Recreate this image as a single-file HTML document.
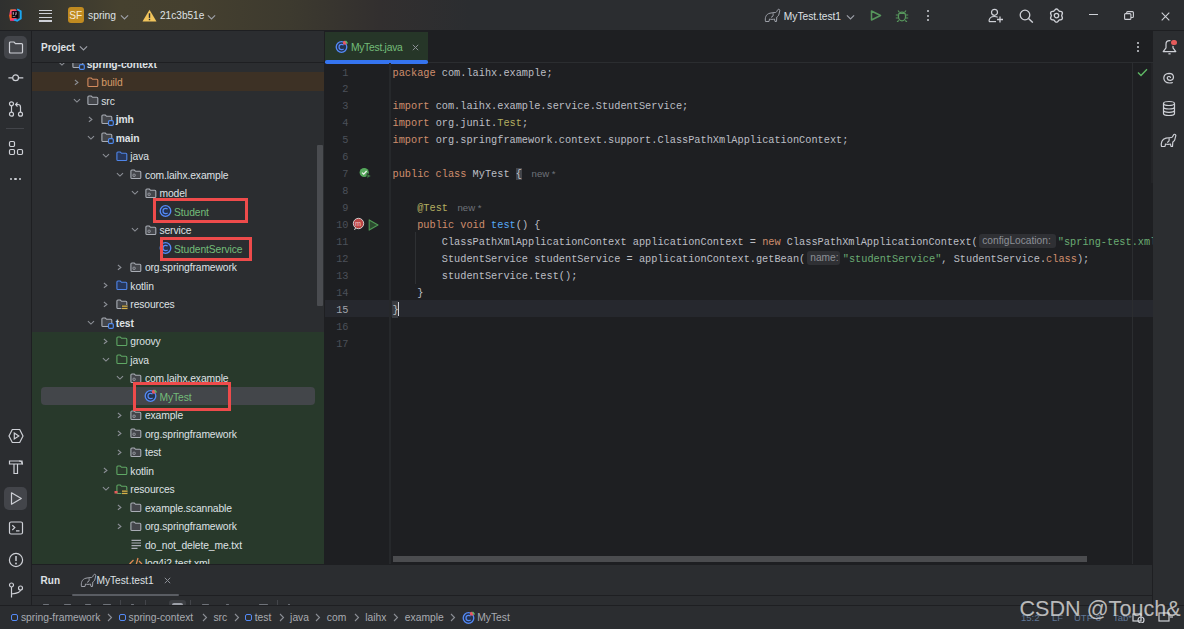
<!DOCTYPE html><html><head><meta charset="utf-8"><style>
*{margin:0;padding:0;box-sizing:border-box}
html,body{width:1184px;height:629px;overflow:hidden;background:#2B2D30;font-family:"Liberation Sans",sans-serif;color:#DFE1E5;position:relative}
.a{position:absolute}
.t{white-space:pre}
.tr{letter-spacing:-0.1px}
.c{position:absolute;font-family:"Liberation Mono",monospace;font-size:10.28px;white-space:pre;line-height:16.94px;height:16.94px;color:#BCBEC4}
.k{color:#CF8E6D}.s{color:#6AAB73}.an{color:#B3AE60}.m{color:#56A8F5}
.hint{display:inline-block;font-family:"Liberation Sans",sans-serif;font-size:10.2px;color:#8C8F96;background:#2F3034;border-radius:3px;line-height:14px;height:14px;vertical-align:1px;margin:0 1.5px 0 1.5px;padding-left:3px!important;letter-spacing:0px}
.auth{font-family:"Liberation Sans",sans-serif;font-size:9.6px;color:#6F737A}
</style></head><body><div class="a" style="left:0px;top:0px;width:1184px;height:30px;background:#2B2D30;background:linear-gradient(90deg,#2F302F 0px,#37362F 40px,#46412F 120px,#45402F 190px,#3D3A2F 290px,#322F2F 380px,#2B2D30 470px)"></div>
<div class="a" style="left:0px;top:30px;width:1184px;height:1px;background:#1E1F22;"></div>
<div class="a" style="left:0px;top:31px;width:31px;height:574px;background:#2B2D30;"></div>
<div class="a" style="left:31px;top:31px;width:1px;height:574px;background:#1E1F22;"></div>
<div class="a" style="left:32px;top:31px;width:292px;height:533px;background:#2B2D30;"></div>
<div class="a" style="left:324px;top:31px;width:1px;height:533px;background:#1E1F22;"></div>
<div class="a" style="left:325px;top:31px;width:828px;height:533px;background:#1E1F22;"></div>
<div class="a" style="left:1152px;top:31px;width:1px;height:574px;background:#1E1F22;"></div>
<div class="a" style="left:1153px;top:31px;width:31px;height:574px;background:#2B2D30;"></div>
<div class="a" style="left:32px;top:564px;width:1120px;height:1px;background:#1E1F22;"></div>
<div class="a" style="left:32px;top:565px;width:1120px;height:40px;background:#2B2D30;"></div>
<div class="a" style="left:0px;top:605px;width:1184px;height:1px;background:#1E1F22;"></div>
<div class="a" style="left:0px;top:606px;width:1184px;height:23px;background:#2B2D30;"></div>
<svg class="a" style="left:8px;top:8px;" width="15" height="15" viewBox="0 0 16 16" fill="none"><defs><linearGradient id="ijg" x1="0" y1="0" x2="0.3" y2="1"><stop offset="0" stop-color="#F9B233"/><stop offset="0.35" stop-color="#F2307F"/><stop offset="0.6" stop-color="#FF6A00"/><stop offset="1" stop-color="#F2307F"/></linearGradient></defs><path d="M2.5 1.6 L8 1.2 L9.5 3 L9 13.8 L2.2 13.6 L1.2 8 Z" fill="url(#ijg)"/><path d="M9.8 1.3 L13.6 3.4 L13.6 11.3 L9.8 13.6 L6.5 12.5" stroke="#1AA6F0" stroke-width="2" fill="none"/><rect x="4" y="3.3" width="7" height="7.4" fill="#0A0610"/><path d="M5.6 4.4 V7.2 M8.6 4.4 V6.8 Q8.6 7.3 7.6 7.3" stroke="#F4D9E8" stroke-width="0.9"/><rect x="5" y="8.9" width="2.8" height="0.7" fill="#BBBBBB"/></svg>
<div class="a" style="left:39px;top:9.8px;width:12.7px;height:1.1px;background:#CED0D6;"></div>
<div class="a" style="left:39px;top:13.350000000000001px;width:12.7px;height:1.1px;background:#CED0D6;"></div>
<div class="a" style="left:39px;top:16.9px;width:12.7px;height:1.1px;background:#CED0D6;"></div>
<div class="a" style="left:39px;top:20.45px;width:12.7px;height:1.1px;background:#CED0D6;"></div>
<div class="a" style="left:68px;top:7px;width:15.5px;height:16px;background:#C18B20;border-radius:3px"></div>
<div class="a t" style="left:68px;top:9.80px;font-size:10.2px;line-height:12px;color:#F3EAD6;width:15.5px;text-align:center;">SF</div>
<div class="a t" style="left:88px;top:9.00px;font-size:10.3px;line-height:14px;color:#DFE1E5;">spring</div>
<svg class="a" style="left:120.2px;top:13.5px;" width="9" height="7" viewBox="0 0 9 7" fill="none"><path d="M0.9 1.3 L4.5 4.9 L8.1 1.3" stroke="#9DA0A8" stroke-width="1.15"/></svg>
<svg class="a" style="left:142px;top:9px;" width="15" height="13" viewBox="0 0 15 13" fill="none"><path d="M7.5 0.8 L14.5 12.5 H0.5 Z" fill="#F2C55C"/><rect x="6.8" y="4.3" width="1.4" height="4.6" fill="#2B2D30"/><rect x="6.8" y="9.8" width="1.4" height="1.4" fill="#2B2D30"/></svg>
<div class="a t" style="left:160px;top:9.00px;font-size:10.1px;line-height:14px;color:#DFE1E5;">21c3b51e</div>
<svg class="a" style="left:207.0px;top:13.5px;" width="9" height="7" viewBox="0 0 9 7" fill="none"><path d="M0.9 1.3 L4.5 4.9 L8.1 1.3" stroke="#9DA0A8" stroke-width="1.15"/></svg>
<svg class="a" style="left:764px;top:8px;" width="17" height="15" viewBox="0 0 17 15" fill="none"><path d="M1.5 13.5 C0.8 10 1.8 6 6 5.2 C8 4.8 10 4.5 11.5 4.5 C12.5 4.5 13 3 13.5 2 C14 1 15.5 1 15.8 2.2 C16 3.5 15 4.5 15 6 C15 7.5 13.5 8.5 12.8 9 L12.5 13.5 H11 L10.5 11 C9 11.5 7 11.5 5.5 11 L5 13.5 Z" stroke="#9DA0A8" stroke-width="1" fill="none" stroke-linejoin="round"/><path d="M9 5.2 C9.5 7.5 9 9 7 9.3" stroke="#9DA0A8" stroke-width="1" fill="none"/></svg>
<div class="a t" style="left:783.8px;top:9.70px;font-size:10.2px;line-height:14px;color:#DFE1E5;">MyTest.test1</div>
<svg class="a" style="left:845.5px;top:13.5px;" width="9" height="7" viewBox="0 0 9 7" fill="none"><path d="M0.9 1.3 L4.5 4.9 L8.1 1.3" stroke="#9DA0A8" stroke-width="1.15"/></svg>
<svg class="a" style="left:870px;top:10px;" width="12" height="11" viewBox="0 0 12 11" fill="none"><path d="M1.5 1 L10.5 5.5 L1.5 10 Z" stroke="#57965C" stroke-width="1.5" stroke-linejoin="round"/></svg>
<svg class="a" style="left:895px;top:9px;" width="14" height="13" viewBox="0 0 14 13" fill="none"><ellipse cx="7" cy="7.5" rx="3.6" ry="4.3" stroke="#57965C" stroke-width="1.3"/><path d="M4.5 3.5 L3 1.5 M9.5 3.5 L11 1.5 M3.4 6 H0.8 M10.6 6 H13.2 M3.4 9 H0.8 M10.6 9 H13.2 M4 11.5 L2 12.8 M10 11.5 L12 12.8 M3.5 4.5 H10.5" stroke="#57965C" stroke-width="1.2"/></svg>
<div class="a" style="left:927px;top:10.3px;width:2px;height:2px;background:#CED0D6;border-radius:1px"></div>
<div class="a" style="left:927px;top:14.5px;width:2px;height:2px;background:#CED0D6;border-radius:1px"></div>
<div class="a" style="left:927px;top:18.700000000000003px;width:2px;height:2px;background:#CED0D6;border-radius:1px"></div>
<svg class="a" style="left:988px;top:8px;" width="16" height="15" viewBox="0 0 16 15" fill="none"><circle cx="6.5" cy="4.3" r="3" stroke="#CED0D6" stroke-width="1.2"/><path d="M1 13.5 C1 9.5 3.5 8.5 6.5 8.5 C8 8.5 9 8.8 9.7 9.2" stroke="#CED0D6" stroke-width="1.2"/><path d="M1 13.6 H8" stroke="#CED0D6" stroke-width="1.2"/><path d="M12 8.5 V14.5 M9 11.5 H15" stroke="#CED0D6" stroke-width="1.3"/></svg>
<svg class="a" style="left:1019px;top:9px;" width="15" height="14" viewBox="0 0 15 14" fill="none"><circle cx="6" cy="6" r="4.8" stroke="#CED0D6" stroke-width="1.3"/><path d="M9.5 9.5 L13.8 13.6" stroke="#CED0D6" stroke-width="1.4"/></svg>
<svg class="a" style="left:1049px;top:8px;" width="15" height="15" viewBox="0 0 15 15" fill="none"><path d="M7.50 1.00 L8.07 1.12 L8.59 1.44 L9.03 1.90 L9.40 2.38 L9.74 2.80 L10.10 3.10 L10.54 3.26 L11.07 3.35 L11.67 3.43 L12.29 3.58 L12.83 3.87 L13.22 4.30 L13.40 4.85 L13.37 5.46 L13.20 6.07 L12.97 6.64 L12.77 7.14 L12.70 7.60 L12.77 8.06 L12.97 8.56 L13.20 9.13 L13.37 9.74 L13.40 10.35 L13.22 10.90 L12.83 11.33 L12.29 11.62 L11.67 11.77 L11.07 11.85 L10.54 11.94 L10.10 12.10 L9.74 12.40 L9.40 12.82 L9.03 13.30 L8.59 13.76 L8.07 14.08 L7.50 14.20 L6.93 14.08 L6.41 13.76 L5.97 13.30 L5.60 12.82 L5.26 12.40 L4.90 12.10 L4.46 11.94 L3.93 11.85 L3.33 11.77 L2.71 11.62 L2.17 11.33 L1.78 10.90 L1.60 10.35 L1.63 9.74 L1.80 9.13 L2.03 8.56 L2.23 8.06 L2.30 7.60 L2.23 7.14 L2.03 6.64 L1.80 6.07 L1.63 5.46 L1.60 4.85 L1.78 4.30 L2.17 3.87 L2.71 3.58 L3.33 3.43 L3.93 3.35 L4.46 3.26 L4.90 3.10 L5.26 2.80 L5.60 2.38 L5.97 1.90 L6.41 1.44 L6.93 1.12 L7.50 1.00 Z" stroke="#CED0D6" stroke-width="1.35" stroke-linejoin="round"/><circle cx="7.5" cy="7.6" r="2.2" stroke="#CED0D6" stroke-width="1.3"/></svg>
<div class="a" style="left:1089px;top:14.3px;width:8.5px;height:1.1px;background:#CED0D6;"></div>
<svg class="a" style="left:1124px;top:11px;" width="10" height="9" viewBox="0 0 10 9" fill="none"><rect x="0.6" y="2.6" width="6.3" height="5.8" rx="1" stroke="#CED0D6" stroke-width="1.1"/><path d="M2.7 2.6 V1.6 Q2.7 0.6 3.7 0.6 H8.4 Q9.4 0.6 9.4 1.6 V5.5 Q9.4 6.5 8.4 6.5 H6.9" stroke="#CED0D6" stroke-width="1.1"/></svg>
<svg class="a" style="left:1161px;top:11.5px;" width="9" height="9" viewBox="0 0 9 9" fill="none"><path d="M0.7 0.7 L8.3 8.3 M8.3 0.7 L0.7 8.3" stroke="#CED0D6" stroke-width="1.1"/></svg>
<div class="a" style="left:4px;top:36px;width:23px;height:23px;background:#43454A;border-radius:5px"></div>
<svg class="a" style="left:8px;top:40px;" width="16" height="15" viewBox="0 0 16 15" fill="none"><path d="M1.5 3 Q1.5 2 2.5 2 H6 L7.5 3.6 H13.5 Q14.5 3.6 14.5 4.6 V12 Q14.5 13 13.5 13 H2.5 Q1.5 13 1.5 12 Z" stroke="#CED0D6" stroke-width="1.2" fill="none"/></svg>
<svg class="a" style="left:5px;top:72px;" width="22" height="12" viewBox="0 0 22 12" fill="none"><circle cx="10.6" cy="5.8" r="2.9" stroke="#CED0D6" stroke-width="1.2" fill="none"/><path d="M3.4 5.8 H7.7 M13.5 5.8 H18.3" stroke="#CED0D6" stroke-width="1.2" fill="none"/></svg>
<svg class="a" style="left:8px;top:101px;" width="16" height="16" viewBox="0 0 16 16" fill="none"><circle cx="3.5" cy="2.8" r="2" stroke="#CED0D6" stroke-width="1.2" fill="none"/><circle cx="3.5" cy="13.2" r="2" stroke="#CED0D6" stroke-width="1.2" fill="none"/><circle cx="12.5" cy="13.2" r="2" stroke="#CED0D6" stroke-width="1.2" fill="none"/><path d="M3.5 4.8 V11.2 M12.5 11.2 V6 Q12.5 3.5 10 3.5 H8 M9.5 1.5 L7.6 3.5 L9.5 5.5" stroke="#CED0D6" stroke-width="1.2" fill="none"/></svg>
<div class="a" style="left:6px;top:127.5px;width:18px;height:1px;background:#43454A;"></div>
<svg class="a" style="left:8px;top:140px;" width="16" height="16" viewBox="0 0 16 16" fill="none"><rect x="1.5" y="1.5" width="5" height="5" rx="1.2" stroke="#CED0D6" stroke-width="1.2" fill="none"/><rect x="1.5" y="9.5" width="5" height="5" rx="1.2" stroke="#CED0D6" stroke-width="1.2" fill="none"/><rect x="9.5" y="9.5" width="5" height="5" rx="1.2" stroke="#CED0D6" stroke-width="1.2" fill="none"/></svg>
<div class="a" style="left:9.5px;top:177.8px;width:2.3px;height:2.3px;background:#CED0D6;border-radius:1px"></div>
<div class="a" style="left:14.3px;top:177.8px;width:2.3px;height:2.3px;background:#CED0D6;border-radius:1px"></div>
<div class="a" style="left:19.1px;top:177.8px;width:2.3px;height:2.3px;background:#CED0D6;border-radius:1px"></div>
<svg class="a" style="left:8px;top:428px;" width="16" height="16" viewBox="0 0 16 16" fill="none"><path d="M4.3 1.5 H11.7 L15 8 L11.7 14.5 H4.3 L1 8 Z" stroke="#CED0D6" stroke-width="1.2" fill="none"/><path d="M6.3 5 L10.8 8 L6.3 11 Z" stroke="#CED0D6" stroke-width="1.2" fill="none"/></svg>
<svg class="a" style="left:8px;top:459px;" width="16" height="16" viewBox="0 0 16 16" fill="none"><path d="M1.5 2 H14 V5 H1.5 Z" stroke="#CED0D6" stroke-width="1.2" fill="none"/><path d="M6 5 V14.5 H9.5 V5" stroke="#CED0D6" stroke-width="1.2" fill="none"/><path d="M11 2 Q14.5 2 14.5 5.5" stroke="#CED0D6" stroke-width="1.2" fill="none"/></svg>
<div class="a" style="left:4px;top:487px;width:23px;height:23px;background:#43454A;border-radius:5px"></div>
<svg class="a" style="left:9px;top:491px;" width="14" height="15" viewBox="0 0 14 15" fill="none"><path d="M2.5 1.8 L12.3 7.5 L2.5 13.2 Z" stroke="#CED0D6" stroke-width="1.2" fill="none" stroke-linejoin="round"/></svg>
<svg class="a" style="left:8px;top:520px;" width="16" height="16" viewBox="0 0 16 16" fill="none"><rect x="1.5" y="2" width="13" height="12" rx="1.5" stroke="#CED0D6" stroke-width="1.2" fill="none"/><path d="M4.3 5.2 L6.8 7.6 L4.3 10 M8 10.8 H11.5" stroke="#CED0D6" stroke-width="1.2" fill="none"/></svg>
<svg class="a" style="left:8px;top:552px;" width="16" height="16" viewBox="0 0 16 16" fill="none"><circle cx="8" cy="8" r="6.6" stroke="#CED0D6" stroke-width="1.2" fill="none"/><path d="M8 4 V9" stroke="#CED0D6" stroke-width="1.5"/><circle cx="8" cy="11.5" r="0.9" fill="#CED0D6"/></svg>
<svg class="a" style="left:8px;top:582px;" width="16" height="17" viewBox="0 0 16 17" fill="none"><circle cx="3.5" cy="3" r="2" stroke="#CED0D6" stroke-width="1.2" fill="none"/><circle cx="12.5" cy="6" r="2" stroke="#CED0D6" stroke-width="1.2" fill="none"/><path d="M3.5 5 V15.5 M12.5 8 Q12.5 11 3.5 12" stroke="#CED0D6" stroke-width="1.2" fill="none"/></svg>
<div class="a" style="left:32px;top:31px;width:292px;height:533px;overflow:hidden"><div class="a" style="left:0px;top:41.099999999999994px;width:292px;height:18.5px;background:#3D3125;"></div><div class="a" style="left:0px;top:300.5px;width:292px;height:232.5px;background:#28392B;"></div><div class="a" style="left:8.600000000000001px;top:356px;width:274.5px;height:18px;background:#43464A;border-radius:4px"></div><div class="a" style="left:285.4px;top:114.30000000000001px;width:5.5px;height:160.5px;background:#4A4C50;border-radius:1px"></div><svg class="a" style="left:26.0px;top:29.7px;" width="9" height="7" viewBox="0 0 9 7" fill="none"><path d="M0.9 1.1 L3.95 4.1 L7 1.1" stroke="#8C8F96" stroke-width="1.1"/></svg><svg class="a" style="left:38.0px;top:25.2px;" width="15" height="14" viewBox="0 0 15 14" fill="none"><path d="M2.9 4.1 Q2.9 3.05 3.95 3.05 H6.3 L7.6 4.3 H11.75 Q12.8 4.3 12.8 5.35 V10.4 Q12.8 11.45 11.75 11.45 H3.95 Q2.9 11.45 2.9 10.4 Z" stroke="#A9ADB5" stroke-width="1.1" fill="#43454A"/><rect x="9.5" y="8.6" width="4.8" height="4.8" rx="1.2" stroke="#4F8BF0" stroke-width="1.2" fill="#2B2D30"/></svg><div class="a t" style="left:54.7px;top:26.80px;font-size:10.3px;line-height:14px;color:#DFE1E5;font-weight:bold;letter-spacing:-0.1px;">spring-context</div><svg class="a" style="left:41.55px;top:46.7px;" width="7" height="9" viewBox="0 0 7 9" fill="none"><path d="M0.9 2 L3.9 4.4 L0.9 6.8" stroke="#8C8F96" stroke-width="1.1"/></svg><svg class="a" style="left:52.55px;top:43.7px;" width="15" height="14" viewBox="0 0 15 14" fill="none"><path d="M2.9 4.1 Q2.9 3.05 3.95 3.05 H6.3 L7.6 4.3 H11.75 Q12.8 4.3 12.8 5.35 V10.4 Q12.8 11.45 11.75 11.45 H3.95 Q2.9 11.45 2.9 10.4 Z" stroke="#D48B5E" stroke-width="1.1" fill="#46342A"/></svg><div class="a t" style="left:69.25px;top:45.30px;font-size:10.3px;line-height:14px;color:#D59A68;letter-spacing:-0.1px;">build</div><svg class="a" style="left:40.55px;top:66.7px;" width="9" height="7" viewBox="0 0 9 7" fill="none"><path d="M0.9 1.1 L3.95 4.1 L7 1.1" stroke="#8C8F96" stroke-width="1.1"/></svg><svg class="a" style="left:52.55px;top:62.2px;" width="15" height="14" viewBox="0 0 15 14" fill="none"><path d="M2.9 4.1 Q2.9 3.05 3.95 3.05 H6.3 L7.6 4.3 H11.75 Q12.8 4.3 12.8 5.35 V10.4 Q12.8 11.45 11.75 11.45 H3.95 Q2.9 11.45 2.9 10.4 Z" stroke="#A9ADB5" stroke-width="1.1" fill="#43454A"/></svg><div class="a t" style="left:69.25px;top:63.80px;font-size:10.3px;line-height:14px;color:#DFE1E5;letter-spacing:-0.1px;">src</div><svg class="a" style="left:56.1px;top:83.7px;" width="7" height="9" viewBox="0 0 7 9" fill="none"><path d="M0.9 2 L3.9 4.4 L0.9 6.8" stroke="#8C8F96" stroke-width="1.1"/></svg><svg class="a" style="left:67.1px;top:80.7px;" width="15" height="14" viewBox="0 0 15 14" fill="none"><path d="M2.9 4.1 Q2.9 3.05 3.95 3.05 H6.3 L7.6 4.3 H11.75 Q12.8 4.3 12.8 5.35 V10.4 Q12.8 11.45 11.75 11.45 H3.95 Q2.9 11.45 2.9 10.4 Z" stroke="#A9ADB5" stroke-width="1.1" fill="#43454A"/><rect x="9.5" y="8.6" width="4.8" height="4.8" rx="1.2" stroke="#4F8BF0" stroke-width="1.2" fill="#2B2D30"/></svg><div class="a t" style="left:83.8px;top:82.30px;font-size:10.3px;line-height:14px;color:#DFE1E5;font-weight:bold;letter-spacing:-0.1px;">jmh</div><svg class="a" style="left:55.1px;top:103.7px;" width="9" height="7" viewBox="0 0 9 7" fill="none"><path d="M0.9 1.1 L3.95 4.1 L7 1.1" stroke="#8C8F96" stroke-width="1.1"/></svg><svg class="a" style="left:67.1px;top:99.2px;" width="15" height="14" viewBox="0 0 15 14" fill="none"><path d="M2.9 4.1 Q2.9 3.05 3.95 3.05 H6.3 L7.6 4.3 H11.75 Q12.8 4.3 12.8 5.35 V10.4 Q12.8 11.45 11.75 11.45 H3.95 Q2.9 11.45 2.9 10.4 Z" stroke="#A9ADB5" stroke-width="1.1" fill="#43454A"/><rect x="9.5" y="8.6" width="4.8" height="4.8" rx="1.2" stroke="#4F8BF0" stroke-width="1.2" fill="#2B2D30"/></svg><div class="a t" style="left:83.8px;top:100.80px;font-size:10.3px;line-height:14px;color:#DFE1E5;font-weight:bold;letter-spacing:-0.1px;">main</div><svg class="a" style="left:69.65px;top:122.2px;" width="9" height="7" viewBox="0 0 9 7" fill="none"><path d="M0.9 1.1 L3.95 4.1 L7 1.1" stroke="#8C8F96" stroke-width="1.1"/></svg><svg class="a" style="left:81.65px;top:117.7px;" width="15" height="14" viewBox="0 0 15 14" fill="none"><path d="M2.9 4.1 Q2.9 3.05 3.95 3.05 H6.3 L7.6 4.3 H11.75 Q12.8 4.3 12.8 5.35 V10.4 Q12.8 11.45 11.75 11.45 H3.95 Q2.9 11.45 2.9 10.4 Z" stroke="#4F85E8" stroke-width="1.1" fill="#27375A"/></svg><div class="a t" style="left:98.35px;top:119.30px;font-size:10.3px;line-height:14px;color:#DFE1E5;letter-spacing:-0.1px;">java</div><svg class="a" style="left:84.2px;top:140.7px;" width="9" height="7" viewBox="0 0 9 7" fill="none"><path d="M0.9 1.1 L3.95 4.1 L7 1.1" stroke="#8C8F96" stroke-width="1.1"/></svg><svg class="a" style="left:96.2px;top:136.2px;" width="15" height="14" viewBox="0 0 15 14" fill="none"><path d="M2.9 4.1 Q2.9 3.05 3.95 3.05 H6.3 L7.6 4.3 H11.75 Q12.8 4.3 12.8 5.35 V10.4 Q12.8 11.45 11.75 11.45 H3.95 Q2.9 11.45 2.9 10.4 Z" stroke="#A9ADB5" stroke-width="1.1" fill="#43454A"/><rect x="5" y="7.2" width="2.2" height="2.2" rx="0.5" stroke="#A9ADB5" stroke-width="0.8"/></svg><div class="a t" style="left:112.9px;top:137.80px;font-size:10.3px;line-height:14px;color:#DFE1E5;letter-spacing:-0.1px;">com.laihx.example</div><svg class="a" style="left:98.75px;top:159.2px;" width="9" height="7" viewBox="0 0 9 7" fill="none"><path d="M0.9 1.1 L3.95 4.1 L7 1.1" stroke="#8C8F96" stroke-width="1.1"/></svg><svg class="a" style="left:110.75px;top:154.7px;" width="15" height="14" viewBox="0 0 15 14" fill="none"><path d="M2.9 4.1 Q2.9 3.05 3.95 3.05 H6.3 L7.6 4.3 H11.75 Q12.8 4.3 12.8 5.35 V10.4 Q12.8 11.45 11.75 11.45 H3.95 Q2.9 11.45 2.9 10.4 Z" stroke="#A9ADB5" stroke-width="1.1" fill="#43454A"/><rect x="5" y="7.2" width="2.2" height="2.2" rx="0.5" stroke="#A9ADB5" stroke-width="0.8"/></svg><div class="a t" style="left:127.45px;top:156.30px;font-size:10.3px;line-height:14px;color:#DFE1E5;letter-spacing:-0.1px;">model</div><svg class="a" style="left:126.3px;top:173.2px;" width="15" height="14" viewBox="0 0 15 14" fill="none"><circle cx="7.5" cy="7" r="5.3" stroke="#548AF7" stroke-width="1.3" fill="#25324D"/><path d="M9.6 5.2 Q8.9 4.3 7.6 4.3 Q5 4.3 5 7 Q5 9.7 7.6 9.7 Q8.9 9.7 9.6 8.8" stroke="#548AF7" stroke-width="1.2"/></svg><div class="a t" style="left:142.0px;top:174.80px;font-size:10.3px;line-height:14px;color:#73BD79;letter-spacing:-0.1px;">Student</div><svg class="a" style="left:98.75px;top:196.2px;" width="9" height="7" viewBox="0 0 9 7" fill="none"><path d="M0.9 1.1 L3.95 4.1 L7 1.1" stroke="#8C8F96" stroke-width="1.1"/></svg><svg class="a" style="left:110.75px;top:191.7px;" width="15" height="14" viewBox="0 0 15 14" fill="none"><path d="M2.9 4.1 Q2.9 3.05 3.95 3.05 H6.3 L7.6 4.3 H11.75 Q12.8 4.3 12.8 5.35 V10.4 Q12.8 11.45 11.75 11.45 H3.95 Q2.9 11.45 2.9 10.4 Z" stroke="#A9ADB5" stroke-width="1.1" fill="#43454A"/><rect x="5" y="7.2" width="2.2" height="2.2" rx="0.5" stroke="#A9ADB5" stroke-width="0.8"/></svg><div class="a t" style="left:127.45px;top:193.30px;font-size:10.3px;line-height:14px;color:#DFE1E5;letter-spacing:-0.1px;">service</div><svg class="a" style="left:126.3px;top:210.2px;" width="15" height="14" viewBox="0 0 15 14" fill="none"><circle cx="7.5" cy="7" r="5.3" stroke="#548AF7" stroke-width="1.3" fill="#25324D"/><path d="M9.6 5.2 Q8.9 4.3 7.6 4.3 Q5 4.3 5 7 Q5 9.7 7.6 9.7 Q8.9 9.7 9.6 8.8" stroke="#548AF7" stroke-width="1.2"/></svg><div class="a t" style="left:142.0px;top:211.80px;font-size:10.3px;line-height:14px;color:#73BD79;letter-spacing:-0.1px;">StudentService</div><svg class="a" style="left:85.2px;top:231.7px;" width="7" height="9" viewBox="0 0 7 9" fill="none"><path d="M0.9 2 L3.9 4.4 L0.9 6.8" stroke="#8C8F96" stroke-width="1.1"/></svg><svg class="a" style="left:96.2px;top:228.7px;" width="15" height="14" viewBox="0 0 15 14" fill="none"><path d="M2.9 4.1 Q2.9 3.05 3.95 3.05 H6.3 L7.6 4.3 H11.75 Q12.8 4.3 12.8 5.35 V10.4 Q12.8 11.45 11.75 11.45 H3.95 Q2.9 11.45 2.9 10.4 Z" stroke="#A9ADB5" stroke-width="1.1" fill="#43454A"/><rect x="5" y="7.2" width="2.2" height="2.2" rx="0.5" stroke="#A9ADB5" stroke-width="0.8"/></svg><div class="a t" style="left:112.9px;top:230.30px;font-size:10.3px;line-height:14px;color:#DFE1E5;letter-spacing:-0.1px;">org.springframework</div><svg class="a" style="left:70.65px;top:250.2px;" width="7" height="9" viewBox="0 0 7 9" fill="none"><path d="M0.9 2 L3.9 4.4 L0.9 6.8" stroke="#8C8F96" stroke-width="1.1"/></svg><svg class="a" style="left:81.65px;top:247.2px;" width="15" height="14" viewBox="0 0 15 14" fill="none"><path d="M2.9 4.1 Q2.9 3.05 3.95 3.05 H6.3 L7.6 4.3 H11.75 Q12.8 4.3 12.8 5.35 V10.4 Q12.8 11.45 11.75 11.45 H3.95 Q2.9 11.45 2.9 10.4 Z" stroke="#4F85E8" stroke-width="1.1" fill="#27375A"/></svg><div class="a t" style="left:98.35px;top:248.80px;font-size:10.3px;line-height:14px;color:#DFE1E5;letter-spacing:-0.1px;">kotlin</div><svg class="a" style="left:70.65px;top:268.7px;" width="7" height="9" viewBox="0 0 7 9" fill="none"><path d="M0.9 2 L3.9 4.4 L0.9 6.8" stroke="#8C8F96" stroke-width="1.1"/></svg><svg class="a" style="left:81.65px;top:265.7px;" width="15" height="14" viewBox="0 0 15 14" fill="none"><path d="M2.9 4.1 Q2.9 3.05 3.95 3.05 H6.3 L7.6 4.3 H11.75 Q12.8 4.3 12.8 5.35 V10.4 Q12.8 11.45 11.75 11.45 H3.95 Q2.9 11.45 2.9 10.4 Z" stroke="#A9ADB5" stroke-width="1.1" fill="#43454A"/><rect x="7.5" y="8" width="6" height="4.5" fill="#2B2D30"/><rect x="8" y="8.5" width="5.5" height="1.3" fill="#D8B24A"/><rect x="8" y="10.8" width="5.5" height="1.3" fill="#D8B24A"/></svg><div class="a t" style="left:98.35px;top:267.30px;font-size:10.3px;line-height:14px;color:#DFE1E5;letter-spacing:-0.1px;">resources</div><svg class="a" style="left:55.1px;top:288.7px;" width="9" height="7" viewBox="0 0 9 7" fill="none"><path d="M0.9 1.1 L3.95 4.1 L7 1.1" stroke="#8C8F96" stroke-width="1.1"/></svg><svg class="a" style="left:67.1px;top:284.2px;" width="15" height="14" viewBox="0 0 15 14" fill="none"><path d="M2.9 4.1 Q2.9 3.05 3.95 3.05 H6.3 L7.6 4.3 H11.75 Q12.8 4.3 12.8 5.35 V10.4 Q12.8 11.45 11.75 11.45 H3.95 Q2.9 11.45 2.9 10.4 Z" stroke="#A9ADB5" stroke-width="1.1" fill="#43454A"/><rect x="9.5" y="8.6" width="4.8" height="4.8" rx="1.2" stroke="#4F8BF0" stroke-width="1.2" fill="#2B2D30"/></svg><div class="a t" style="left:83.8px;top:285.80px;font-size:10.3px;line-height:14px;color:#DFE1E5;font-weight:bold;letter-spacing:-0.1px;">test</div><svg class="a" style="left:70.65px;top:305.7px;" width="7" height="9" viewBox="0 0 7 9" fill="none"><path d="M0.9 2 L3.9 4.4 L0.9 6.8" stroke="#8C8F96" stroke-width="1.1"/></svg><svg class="a" style="left:81.65px;top:302.7px;" width="15" height="14" viewBox="0 0 15 14" fill="none"><path d="M2.9 4.1 Q2.9 3.05 3.95 3.05 H6.3 L7.6 4.3 H11.75 Q12.8 4.3 12.8 5.35 V10.4 Q12.8 11.45 11.75 11.45 H3.95 Q2.9 11.45 2.9 10.4 Z" stroke="#5FA865" stroke-width="1.1" fill="#2A3A2C"/></svg><div class="a t" style="left:98.35px;top:304.30px;font-size:10.3px;line-height:14px;color:#DFE1E5;letter-spacing:-0.1px;">groovy</div><svg class="a" style="left:69.65px;top:325.7px;" width="9" height="7" viewBox="0 0 9 7" fill="none"><path d="M0.9 1.1 L3.95 4.1 L7 1.1" stroke="#8C8F96" stroke-width="1.1"/></svg><svg class="a" style="left:81.65px;top:321.2px;" width="15" height="14" viewBox="0 0 15 14" fill="none"><path d="M2.9 4.1 Q2.9 3.05 3.95 3.05 H6.3 L7.6 4.3 H11.75 Q12.8 4.3 12.8 5.35 V10.4 Q12.8 11.45 11.75 11.45 H3.95 Q2.9 11.45 2.9 10.4 Z" stroke="#5FA865" stroke-width="1.1" fill="#2A3A2C"/></svg><div class="a t" style="left:98.35px;top:322.80px;font-size:10.3px;line-height:14px;color:#DFE1E5;letter-spacing:-0.1px;">java</div><svg class="a" style="left:84.2px;top:344.2px;" width="9" height="7" viewBox="0 0 9 7" fill="none"><path d="M0.9 1.1 L3.95 4.1 L7 1.1" stroke="#8C8F96" stroke-width="1.1"/></svg><svg class="a" style="left:96.2px;top:339.7px;" width="15" height="14" viewBox="0 0 15 14" fill="none"><path d="M2.9 4.1 Q2.9 3.05 3.95 3.05 H6.3 L7.6 4.3 H11.75 Q12.8 4.3 12.8 5.35 V10.4 Q12.8 11.45 11.75 11.45 H3.95 Q2.9 11.45 2.9 10.4 Z" stroke="#A9ADB5" stroke-width="1.1" fill="#43454A"/><rect x="5" y="7.2" width="2.2" height="2.2" rx="0.5" stroke="#A9ADB5" stroke-width="0.8"/></svg><div class="a t" style="left:112.9px;top:341.30px;font-size:10.3px;line-height:14px;color:#DFE1E5;letter-spacing:-0.1px;">com.laihx.example</div><svg class="a" style="left:110.75px;top:358.2px;" width="15" height="14" viewBox="0 0 15 14" fill="none"><circle cx="7.5" cy="7" r="5.3" stroke="#548AF7" stroke-width="1.3" fill="#25324D"/><path d="M9.6 5.2 Q8.9 4.3 7.6 4.3 Q5 4.3 5 7 Q5 9.7 7.6 9.7 Q8.9 9.7 9.6 8.8" stroke="#548AF7" stroke-width="1.2"/><circle cx="10.8" cy="2.8" r="2" fill="#E55765"/><path d="M11.5 1 L13.5 3.5" stroke="#5FB865" stroke-width="1.3"/></svg><div class="a t" style="left:127.45px;top:359.80px;font-size:10.3px;line-height:14px;color:#73BD79;letter-spacing:-0.1px;">MyTest</div><svg class="a" style="left:85.2px;top:379.7px;" width="7" height="9" viewBox="0 0 7 9" fill="none"><path d="M0.9 2 L3.9 4.4 L0.9 6.8" stroke="#8C8F96" stroke-width="1.1"/></svg><svg class="a" style="left:96.2px;top:376.7px;" width="15" height="14" viewBox="0 0 15 14" fill="none"><path d="M2.9 4.1 Q2.9 3.05 3.95 3.05 H6.3 L7.6 4.3 H11.75 Q12.8 4.3 12.8 5.35 V10.4 Q12.8 11.45 11.75 11.45 H3.95 Q2.9 11.45 2.9 10.4 Z" stroke="#A9ADB5" stroke-width="1.1" fill="#43454A"/><rect x="5" y="7.2" width="2.2" height="2.2" rx="0.5" stroke="#A9ADB5" stroke-width="0.8"/></svg><div class="a t" style="left:112.9px;top:378.30px;font-size:10.3px;line-height:14px;color:#DFE1E5;letter-spacing:-0.1px;">example</div><svg class="a" style="left:85.2px;top:398.2px;" width="7" height="9" viewBox="0 0 7 9" fill="none"><path d="M0.9 2 L3.9 4.4 L0.9 6.8" stroke="#8C8F96" stroke-width="1.1"/></svg><svg class="a" style="left:96.2px;top:395.2px;" width="15" height="14" viewBox="0 0 15 14" fill="none"><path d="M2.9 4.1 Q2.9 3.05 3.95 3.05 H6.3 L7.6 4.3 H11.75 Q12.8 4.3 12.8 5.35 V10.4 Q12.8 11.45 11.75 11.45 H3.95 Q2.9 11.45 2.9 10.4 Z" stroke="#A9ADB5" stroke-width="1.1" fill="#43454A"/><rect x="5" y="7.2" width="2.2" height="2.2" rx="0.5" stroke="#A9ADB5" stroke-width="0.8"/></svg><div class="a t" style="left:112.9px;top:396.80px;font-size:10.3px;line-height:14px;color:#DFE1E5;letter-spacing:-0.1px;">org.springframework</div><svg class="a" style="left:85.2px;top:416.7px;" width="7" height="9" viewBox="0 0 7 9" fill="none"><path d="M0.9 2 L3.9 4.4 L0.9 6.8" stroke="#8C8F96" stroke-width="1.1"/></svg><svg class="a" style="left:96.2px;top:413.7px;" width="15" height="14" viewBox="0 0 15 14" fill="none"><path d="M2.9 4.1 Q2.9 3.05 3.95 3.05 H6.3 L7.6 4.3 H11.75 Q12.8 4.3 12.8 5.35 V10.4 Q12.8 11.45 11.75 11.45 H3.95 Q2.9 11.45 2.9 10.4 Z" stroke="#A9ADB5" stroke-width="1.1" fill="#43454A"/><rect x="5" y="7.2" width="2.2" height="2.2" rx="0.5" stroke="#A9ADB5" stroke-width="0.8"/></svg><div class="a t" style="left:112.9px;top:415.30px;font-size:10.3px;line-height:14px;color:#DFE1E5;letter-spacing:-0.1px;">test</div><svg class="a" style="left:70.65px;top:435.2px;" width="7" height="9" viewBox="0 0 7 9" fill="none"><path d="M0.9 2 L3.9 4.4 L0.9 6.8" stroke="#8C8F96" stroke-width="1.1"/></svg><svg class="a" style="left:81.65px;top:432.2px;" width="15" height="14" viewBox="0 0 15 14" fill="none"><path d="M2.9 4.1 Q2.9 3.05 3.95 3.05 H6.3 L7.6 4.3 H11.75 Q12.8 4.3 12.8 5.35 V10.4 Q12.8 11.45 11.75 11.45 H3.95 Q2.9 11.45 2.9 10.4 Z" stroke="#5FA865" stroke-width="1.1" fill="#2A3A2C"/></svg><div class="a t" style="left:98.35px;top:433.80px;font-size:10.3px;line-height:14px;color:#DFE1E5;letter-spacing:-0.1px;">kotlin</div><svg class="a" style="left:69.65px;top:455.2px;" width="9" height="7" viewBox="0 0 9 7" fill="none"><path d="M0.9 1.1 L3.95 4.1 L7 1.1" stroke="#8C8F96" stroke-width="1.1"/></svg><svg class="a" style="left:81.65px;top:450.7px;" width="15" height="14" viewBox="0 0 15 14" fill="none"><path d="M2.9 4.1 Q2.9 3.05 3.95 3.05 H6.3 L7.6 4.3 H11.75 Q12.8 4.3 12.8 5.35 V10.4 Q12.8 11.45 11.75 11.45 H3.95 Q2.9 11.45 2.9 10.4 Z" stroke="#5FA865" stroke-width="1.1" fill="#2A3A2C"/><rect x="7.5" y="8" width="6" height="4.5" fill="#283528"/><rect x="8" y="8.5" width="5.5" height="1.3" fill="#D8B24A"/><rect x="8" y="10.8" width="5.5" height="1.3" fill="#D8B24A"/><rect x="0.5" y="9" width="3" height="2.5" fill="#E55B5B"/></svg><div class="a t" style="left:98.35px;top:452.30px;font-size:10.3px;line-height:14px;color:#DFE1E5;letter-spacing:-0.1px;">resources</div><svg class="a" style="left:85.2px;top:472.2px;" width="7" height="9" viewBox="0 0 7 9" fill="none"><path d="M0.9 2 L3.9 4.4 L0.9 6.8" stroke="#8C8F96" stroke-width="1.1"/></svg><svg class="a" style="left:96.2px;top:469.2px;" width="15" height="14" viewBox="0 0 15 14" fill="none"><path d="M2.9 4.1 Q2.9 3.05 3.95 3.05 H6.3 L7.6 4.3 H11.75 Q12.8 4.3 12.8 5.35 V10.4 Q12.8 11.45 11.75 11.45 H3.95 Q2.9 11.45 2.9 10.4 Z" stroke="#A9ADB5" stroke-width="1.1" fill="#43454A"/></svg><div class="a t" style="left:112.9px;top:470.80px;font-size:10.3px;line-height:14px;color:#DFE1E5;letter-spacing:-0.1px;">example.scannable</div><svg class="a" style="left:85.2px;top:490.7px;" width="7" height="9" viewBox="0 0 7 9" fill="none"><path d="M0.9 2 L3.9 4.4 L0.9 6.8" stroke="#8C8F96" stroke-width="1.1"/></svg><svg class="a" style="left:96.2px;top:487.7px;" width="15" height="14" viewBox="0 0 15 14" fill="none"><path d="M2.9 4.1 Q2.9 3.05 3.95 3.05 H6.3 L7.6 4.3 H11.75 Q12.8 4.3 12.8 5.35 V10.4 Q12.8 11.45 11.75 11.45 H3.95 Q2.9 11.45 2.9 10.4 Z" stroke="#A9ADB5" stroke-width="1.1" fill="#43454A"/></svg><div class="a t" style="left:112.9px;top:489.30px;font-size:10.3px;line-height:14px;color:#DFE1E5;letter-spacing:-0.1px;">org.springframework</div><svg class="a" style="left:96.2px;top:506.2px;" width="15" height="14" viewBox="0 0 15 14" fill="none"><path d="M3.5 3.3 H13 M3.5 6 H13 M3.5 8.7 H13 M3.5 11.4 H9.5" stroke="#A9ADB5" stroke-width="1.2"/></svg><div class="a t" style="left:112.9px;top:507.80px;font-size:10.3px;line-height:14px;color:#DFE1E5;letter-spacing:-0.1px;">do_not_delete_me.txt</div><svg class="a" style="left:96.2px;top:524.7px;" width="15" height="14" viewBox="0 0 15 14" fill="none"><path d="M5.5 4 L2 7.5 L5.5 11 M10 2 L7 13 M11 5 L14 8" stroke="#E08855" stroke-width="1.3"/></svg><div class="a t" style="left:112.9px;top:526.30px;font-size:10.3px;line-height:14px;color:#DFE1E5;letter-spacing:-0.1px;">log4j2-test.xml</div></div>
<div class="a" style="left:32px;top:31px;width:292px;height:31px;background:#2B2D30;"></div>
<div class="a t" style="left:41px;top:40.60px;font-size:10px;line-height:14px;color:#DFE1E5;font-weight:bold;">Project</div>
<svg class="a" style="left:78.5px;top:45px;" width="9" height="7" viewBox="0 0 9 7" fill="none"><path d="M0.9 1.3 L4.5 4.9 L8.1 1.3" stroke="#9DA0A8" stroke-width="1.15"/></svg>
<div class="a" style="left:32px;top:62px;width:292px;height:1px;background:#1E1F22;"></div>
<div class="a" style="left:153.3px;top:198.3px;width:94.7px;height:24.5px;background:transparent;border:3px solid #EE4B4B"></div>
<div class="a" style="left:160.3px;top:236.8px;width:91.6px;height:24.1px;background:transparent;border:3px solid #EE4B4B"></div>
<div class="a" style="left:132.6px;top:382.2px;width:98.3px;height:29.2px;background:transparent;border:3px solid #EE4B4B"></div>
<div class="a" style="left:325px;top:31px;width:828px;height:533px;overflow:hidden"><div class="a" style="left:0px;top:0.5px;width:103px;height:30.5px;background:#263628;"></div><div class="a" style="left:0px;top:29px;width:103px;height:3.6px;background:#3574F0;border-radius:1.8px"></div><svg class="a" style="left:9.0px;top:8.7px;" width="15" height="14" viewBox="0 0 15 14" fill="none"><circle cx="7.5" cy="7" r="5.3" stroke="#548AF7" stroke-width="1.3" fill="#25324D"/><path d="M9.6 5.2 Q8.9 4.3 7.6 4.3 Q5 4.3 5 7 Q5 9.7 7.6 9.7 Q8.9 9.7 9.6 8.8" stroke="#548AF7" stroke-width="1.2"/><circle cx="10.8" cy="2.8" r="2" fill="#E55765"/><path d="M11.5 1 L13.5 3.5" stroke="#5FB865" stroke-width="1.3"/></svg><div class="a t" style="left:25.899999999999977px;top:10.00px;font-size:10.3px;line-height:14px;color:#73BD79;letter-spacing:-0.25px;">MyTest.java</div><svg class="a" style="left:87px;top:12.5px;" width="7" height="7" viewBox="0 0 7 7" fill="none"><path d="M0.8 0.8 L6.2 6.2 M6.2 0.8 L0.8 6.2" stroke="#8C8F96" stroke-width="1"/></svg><div class="a" style="left:103px;top:31px;width:725px;height:1px;background:#2B2D30;"></div><div class="a" style="left:812px;top:10.799999999999997px;width:1.8px;height:1.8px;background:#CED0D6;border-radius:1px"></div><div class="a" style="left:812px;top:14.999999999999996px;width:1.8px;height:1.8px;background:#CED0D6;border-radius:1px"></div><div class="a" style="left:812px;top:19.199999999999996px;width:1.8px;height:1.8px;background:#CED0D6;border-radius:1px"></div><svg class="a" style="left:812px;top:37px;" width="11" height="9" viewBox="0 0 11 9" fill="none"><path d="M1 4.5 L4 7.5 L10 1.2" stroke="#5FB865" stroke-width="1.4"/></svg><div class="a" style="left:0px;top:268.9px;width:828px;height:17.6px;background:#26282E;"></div><div class="a" style="left:67.30000000000001px;top:269.5px;width:6px;height:17px;background:#393B40;"></div><div class="a" style="left:64.19999999999999px;top:32px;width:2px;height:533px;background:#26282B;"></div><div class="a" style="left:806.7px;top:32px;width:1px;height:533px;background:#2B2D30;"></div><div class="a" style="left:90.30000000000001px;top:201px;width:1px;height:51.5px;background:#2E3033;"></div><div class="c" style="left:3.5px;top:33.50px;width:20px;text-align:right;color:#4B5059">1</div><div class="c" style="left:3.5px;top:50.44px;width:20px;text-align:right;color:#4B5059">2</div><div class="c" style="left:3.5px;top:67.38px;width:20px;text-align:right;color:#4B5059">3</div><div class="c" style="left:3.5px;top:84.32px;width:20px;text-align:right;color:#4B5059">4</div><div class="c" style="left:3.5px;top:101.26px;width:20px;text-align:right;color:#4B5059">5</div><div class="c" style="left:3.5px;top:118.20px;width:20px;text-align:right;color:#4B5059">6</div><div class="c" style="left:3.5px;top:135.14px;width:20px;text-align:right;color:#4B5059">7</div><div class="c" style="left:3.5px;top:152.08px;width:20px;text-align:right;color:#4B5059">8</div><div class="c" style="left:3.5px;top:169.02px;width:20px;text-align:right;color:#4B5059">9</div><div class="c" style="left:3.5px;top:185.96px;width:20px;text-align:right;color:#4B5059">10</div><div class="c" style="left:3.5px;top:202.90px;width:20px;text-align:right;color:#4B5059">11</div><div class="c" style="left:3.5px;top:219.84px;width:20px;text-align:right;color:#4B5059">12</div><div class="c" style="left:3.5px;top:236.78px;width:20px;text-align:right;color:#4B5059">13</div><div class="c" style="left:3.5px;top:253.72px;width:20px;text-align:right;color:#4B5059">14</div><div class="c" style="left:3.5px;top:270.66px;width:20px;text-align:right;color:#A1A3AB">15</div><div class="c" style="left:3.5px;top:287.60px;width:20px;text-align:right;color:#4B5059">16</div><div class="c" style="left:3.5px;top:304.54px;width:20px;text-align:right;color:#4B5059">17</div><div class="c" style="left:67.5px;top:33.50px"><span class="k">package</span> com.laihx.example;</div><div class="c" style="left:67.5px;top:67.38px"><span class="k">import</span> com.laihx.example.service.StudentService;</div><div class="c" style="left:67.5px;top:84.32px"><span class="k">import</span> org.junit.<span class="an">Test</span>;</div><div class="c" style="left:67.5px;top:101.26px"><span class="k">import</span> org.springframework.context.support.ClassPathXmlApplicationContext;</div><div class="c" style="left:67.5px;top:135.14px"><span class="k">public class</span> MyTest <span style="background:#43454A;outline:0px">{</span> <span class="auth" style="margin-left:3.5px">new *</span></div><div class="c" style="left:67.5px;top:169.02px">    <span class="an">@Test</span><span class="auth" style="margin-left:9.5px">new *</span></div><div class="c" style="left:67.5px;top:185.96px">    <span class="k">public void</span> <span class="m">test</span>() {</div><div class="c" style="left:67.5px;top:202.90px">        ClassPathXmlApplicationContext applicationContext = <span class="k">new</span> ClassPathXmlApplicationContext(<span class="hint" style="width:77px;padding-left:3px">configLocation:</span><span class="s">"spring-test.xml"</span>);</div><div class="c" style="left:67.5px;top:219.84px">        StudentService studentService = applicationContext.getBean(<span class="hint" style="width:33px;padding-left:3px;margin-left:2px;margin-right:2.5px">name:</span><span class="s">"studentService"</span>, StudentService.<span class="k">class</span>);</div><div class="c" style="left:67.5px;top:236.78px">        studentService.test();</div><div class="c" style="left:67.5px;top:253.72px">    }</div><div class="c" style="left:67.5px;top:270.66px">}</div><div class="a" style="left:72.89999999999998px;top:270.8px;width:1px;height:14.2px;background:#CED0D6;"></div><svg class="a" style="left:33.5px;top:136px;" width="14" height="13" viewBox="0 0 14 13" fill="none"><circle cx="5.2" cy="5.5" r="4.6" fill="#55A85B"/><path d="M3 5.6 L4.7 7.2 L7.6 4" stroke="#F2F2F2" stroke-width="1.2"/><path d="M8 6.5 L12.3 9 L8 11.5 Z" fill="#3F7A44" stroke="#1E1F22" stroke-width="0.7"/></svg><svg class="a" style="left:27px;top:185.8px;" width="13" height="14" viewBox="0 0 13 14" fill="none"><circle cx="6.5" cy="6.5" r="5.2" stroke="#D9D9D9" stroke-width="0.9" fill="#B94646"/><text x="2.9" y="9.1" font-size="7.2" fill="#F3C9C9" font-family="Liberation Sans">m</text><path d="M3.5 11 L2.5 13" stroke="#D9D9D9" stroke-width="1"/></svg><svg class="a" style="left:42.5px;top:187.5px;" width="11" height="12" viewBox="0 0 11 12" fill="none"><path d="M1.2 0.9 L10 6 L1.2 11.1 Z" stroke="#4F9A55" stroke-width="1.1" fill="#2B4A2E" stroke-linejoin="round"/></svg><div class="a" style="left:825.5px;top:32px;width:2.5px;height:120px;background:#232427;"></div><div class="a" style="left:68px;top:525px;width:694px;height:6.3px;background:#4B4C4F;"></div></div>
<svg class="a" style="left:1161px;top:39px;" width="17" height="17" viewBox="0 0 17 17" fill="none"><path d="M5 8.8 V5.2 Q5 1.6 8.5 1.6 Q12 1.6 12 5.2 V8.8 L14.8 12.6 H2.2 Z" stroke="#CED0D6" stroke-width="1.2" fill="none" stroke-linejoin="round"/><path d="M7.4 14.8 H9.6" stroke="#CED0D6" stroke-width="1.2" fill="none"/></svg>
<div class="a" style="left:1171.4px;top:39.6px;width:5.6px;height:5.6px;background:#E55B5B;border-radius:50%;box-shadow:0 0 0 1px #2B2D30"></div>
<svg class="a" style="left:1161px;top:70px;" width="16" height="16" viewBox="0 0 16 16" fill="none"><path d="M9.5 8 Q9.3 6.3 7.8 6.5 Q6 6.8 6.3 8.5 Q6.8 10.5 9.5 10.3 Q12.5 10 12.5 7 Q12.3 3.3 8 3.3 Q3 3.5 2.8 8 Q3 12.8 8.5 13 Q10.5 13 11.8 12.5" stroke="#CED0D6" stroke-width="1.2" fill="none"/></svg>
<svg class="a" style="left:1161px;top:100px;" width="16" height="17" viewBox="0 0 16 17" fill="none"><ellipse cx="8" cy="3.5" rx="5.5" ry="2" stroke="#CED0D6" stroke-width="1.2" fill="none"/><path d="M2.5 3.5 V13.5 Q2.5 15.5 8 15.5 Q13.5 15.5 13.5 13.5 V3.5 M2.5 7 Q2.5 9 8 9 Q13.5 9 13.5 7 M2.5 10.3 Q2.5 12.3 8 12.3 Q13.5 12.3 13.5 10.3" stroke="#CED0D6" stroke-width="1.2" fill="none"/></svg>
<svg class="a" style="left:1160px;top:133px;" width="17" height="15" viewBox="0 0 17 15" fill="none"><path d="M1.5 13.5 C0.8 10 1.8 6 6 5.2 C8 4.8 10 4.5 11.5 4.5 C12.5 4.5 13 3 13.5 2 C14 1 15.5 1 15.8 2.2 C16 3.5 15 4.5 15 6 C15 7.5 13.5 8.5 12.8 9 L12.5 13.5 H11 L10.5 11 C9 11.5 7 11.5 5.5 11 L5 13.5 Z" stroke="#CED0D6" stroke-width="1.2" fill="none" stroke-linejoin="round"/><path d="M9 5.2 C9.5 7.5 9 9 7 9.3" stroke="#CED0D6" stroke-width="1.2" fill="none"/></svg>
<div class="a t" style="left:40.6px;top:574.00px;font-size:10px;line-height:14px;color:#DFE1E5;font-weight:bold;">Run</div>
<svg class="a" style="left:80px;top:573px;" width="17" height="15" viewBox="0 0 17 15" fill="none"><path d="M1.5 13.5 C0.8 10 1.8 6 6 5.2 C8 4.8 10 4.5 11.5 4.5 C12.5 4.5 13 3 13.5 2 C14 1 15.5 1 15.8 2.2 C16 3.5 15 4.5 15 6 C15 7.5 13.5 8.5 12.8 9 L12.5 13.5 H11 L10.5 11 C9 11.5 7 11.5 5.5 11 L5 13.5 Z" stroke="#9DA0A8" stroke-width="1" fill="none" stroke-linejoin="round"/><path d="M9 5.2 C9.5 7.5 9 9 7 9.3" stroke="#9DA0A8" stroke-width="1" fill="none"/></svg>
<div class="a t" style="left:96.4px;top:574.00px;font-size:10.2px;line-height:14px;color:#DFE1E5;">MyTest.test1</div>
<svg class="a" style="left:164px;top:577px;" width="7" height="7" viewBox="0 0 7 7" fill="none"><path d="M0.8 0.8 L6.2 6.2 M6.2 0.8 L0.8 6.2" stroke="#8C8F96" stroke-width="1"/></svg>
<div class="a" style="left:32px;top:595px;width:1120px;height:1px;background:#1E1F22;"></div>
<div class="a" style="left:72px;top:593.5px;width:107px;height:2.2px;background:#5A5D63;border-radius:1px"></div>
<div class="a" style="left:43px;top:603.5px;width:6px;height:1.8px;background:#6F737A;border-radius:1px"></div>
<div class="a" style="left:64px;top:603.5px;width:6.5px;height:1.8px;background:#6F737A;border-radius:1px"></div>
<div class="a" style="left:84.5px;top:603.5px;width:6.5px;height:1.8px;background:#6F737A;border-radius:1px"></div>
<div class="a" style="left:103px;top:603.5px;width:8px;height:1.8px;background:#6F737A;border-radius:1px"></div>
<div class="a" style="left:131px;top:603.5px;width:3px;height:1.8px;background:#6F737A;border-radius:1px"></div>
<div class="a" style="left:202px;top:603.5px;width:7px;height:1.8px;background:#6F737A;border-radius:1px"></div>
<div class="a" style="left:226px;top:603.5px;width:3px;height:1.8px;background:#6F737A;border-radius:1px"></div>
<div class="a" style="left:259px;top:603.5px;width:9px;height:1.8px;background:#6F737A;border-radius:1px"></div>
<div class="a" style="left:288px;top:603.5px;width:2px;height:1.8px;background:#6F737A;border-radius:1px"></div>
<div class="a" style="left:120px;top:600px;width:1px;height:5px;background:#43454A;"></div>
<div class="a" style="left:145px;top:600px;width:1px;height:5px;background:#43454A;"></div>
<div class="a" style="left:190px;top:600px;width:1px;height:5px;background:#43454A;"></div>
<div class="a" style="left:277px;top:600px;width:1px;height:5px;background:#43454A;"></div>
<div class="a" style="left:169px;top:600px;width:17px;height:5px;background:#3C3E42;border-radius:3px 3px 0 0"></div>
<div class="a" style="left:172px;top:603px;width:11px;height:2px;background:#9DA0A8;border-radius:2px 2px 0 0"></div>
<div class="a" style="left:11px;top:614.3px;width:7px;height:7px;background:transparent;border:1.8px solid #548AF7;border-radius:2px"></div>
<div class="a t" style="left:20.9px;top:610.80px;font-size:10.3px;line-height:14px;color:#A8ABB1;">spring-framework</div>
<svg class="a" style="left:107px;top:613.3px;" width="6" height="9" viewBox="0 0 6 9" fill="none"><path d="M1 1 L4.5 4.5 L1 8" stroke="#8C8F96" stroke-width="1.1"/></svg>
<div class="a" style="left:119px;top:614.3px;width:7px;height:7px;background:transparent;border:1.8px solid #548AF7;border-radius:2px"></div>
<div class="a t" style="left:128.5px;top:610.80px;font-size:10.3px;line-height:14px;color:#A8ABB1;">spring-context</div>
<svg class="a" style="left:201.5px;top:613.3px;" width="6" height="9" viewBox="0 0 6 9" fill="none"><path d="M1 1 L4.5 4.5 L1 8" stroke="#8C8F96" stroke-width="1.1"/></svg>
<div class="a t" style="left:213.4px;top:610.80px;font-size:10.3px;line-height:14px;color:#A8ABB1;">src</div>
<svg class="a" style="left:233.5px;top:613.3px;" width="6" height="9" viewBox="0 0 6 9" fill="none"><path d="M1 1 L4.5 4.5 L1 8" stroke="#8C8F96" stroke-width="1.1"/></svg>
<div class="a" style="left:245.3px;top:614.3px;width:7px;height:7px;background:transparent;border:1.8px solid #548AF7;border-radius:2px"></div>
<div class="a t" style="left:254.7px;top:610.80px;font-size:10.3px;line-height:14px;color:#A8ABB1;">test</div>
<svg class="a" style="left:278.8px;top:613.3px;" width="6" height="9" viewBox="0 0 6 9" fill="none"><path d="M1 1 L4.5 4.5 L1 8" stroke="#8C8F96" stroke-width="1.1"/></svg>
<div class="a t" style="left:290.1px;top:610.80px;font-size:10.3px;line-height:14px;color:#A8ABB1;">java</div>
<svg class="a" style="left:315px;top:613.3px;" width="6" height="9" viewBox="0 0 6 9" fill="none"><path d="M1 1 L4.5 4.5 L1 8" stroke="#8C8F96" stroke-width="1.1"/></svg>
<div class="a t" style="left:326.8px;top:610.80px;font-size:10.3px;line-height:14px;color:#A8ABB1;">com</div>
<svg class="a" style="left:354px;top:613.3px;" width="6" height="9" viewBox="0 0 6 9" fill="none"><path d="M1 1 L4.5 4.5 L1 8" stroke="#8C8F96" stroke-width="1.1"/></svg>
<div class="a t" style="left:365.3px;top:610.80px;font-size:10.3px;line-height:14px;color:#A8ABB1;">laihx</div>
<svg class="a" style="left:393px;top:613.3px;" width="6" height="9" viewBox="0 0 6 9" fill="none"><path d="M1 1 L4.5 4.5 L1 8" stroke="#8C8F96" stroke-width="1.1"/></svg>
<div class="a t" style="left:404.8px;top:610.80px;font-size:10.3px;line-height:14px;color:#A8ABB1;">example</div>
<svg class="a" style="left:450px;top:613.3px;" width="6" height="9" viewBox="0 0 6 9" fill="none"><path d="M1 1 L4.5 4.5 L1 8" stroke="#8C8F96" stroke-width="1.1"/></svg>
<svg class="a" style="left:461.3px;top:610.8px;" width="15" height="14" viewBox="0 0 15 14" fill="none"><circle cx="7.5" cy="7" r="5.3" stroke="#548AF7" stroke-width="1.3" fill="#25324D"/><path d="M9.6 5.2 Q8.9 4.3 7.6 4.3 Q5 4.3 5 7 Q5 9.7 7.6 9.7 Q8.9 9.7 9.6 8.8" stroke="#548AF7" stroke-width="1.2"/><circle cx="10.8" cy="2.8" r="2" fill="#E55765"/><path d="M11.5 1 L13.5 3.5" stroke="#5FB865" stroke-width="1.3"/></svg>
<div class="a t" style="left:477.2px;top:610.80px;font-size:10.3px;line-height:14px;color:#A8ABB1;">MyTest</div>
<div class="a t" style="left:1021px;top:611.00px;font-size:9.5px;line-height:14px;color:#5F7696;">15:2</div>
<div class="a t" style="left:1052px;top:611.00px;font-size:9.5px;line-height:14px;color:#5F7696;">LF</div>
<div class="a t" style="left:1074px;top:611.00px;font-size:9.5px;line-height:14px;color:#5F7696;">UTF-8</div>
<div class="a t" style="left:1113px;top:611.00px;font-size:9.5px;line-height:14px;color:#5F7696;">Tab*</div>
<svg class="a" style="left:1132px;top:611px;" width="14" height="12" viewBox="0 0 14 12" fill="none"><rect x="1" y="3" width="8" height="7" stroke="#CED0D6" stroke-width="1.2" fill="none"/><circle cx="9" cy="9" r="3" stroke="#CED0D6" stroke-width="1.2" fill="none"/></svg>
<svg class="a" style="left:1158px;top:611px;" width="16" height="12" viewBox="0 0 16 12" fill="none"><rect x="1" y="2" width="10" height="8" stroke="#CED0D6" stroke-width="1.2" fill="none"/><path d="M12 6 H15" stroke="#CED0D6" stroke-width="1.2" fill="none"/></svg>
<div class="a t" style="left:1019.5px;top:596px;font-size:21.6px;line-height:26px;color:rgba(225,225,225,0.8)">CSDN @Touch&amp;</div></body></html>
